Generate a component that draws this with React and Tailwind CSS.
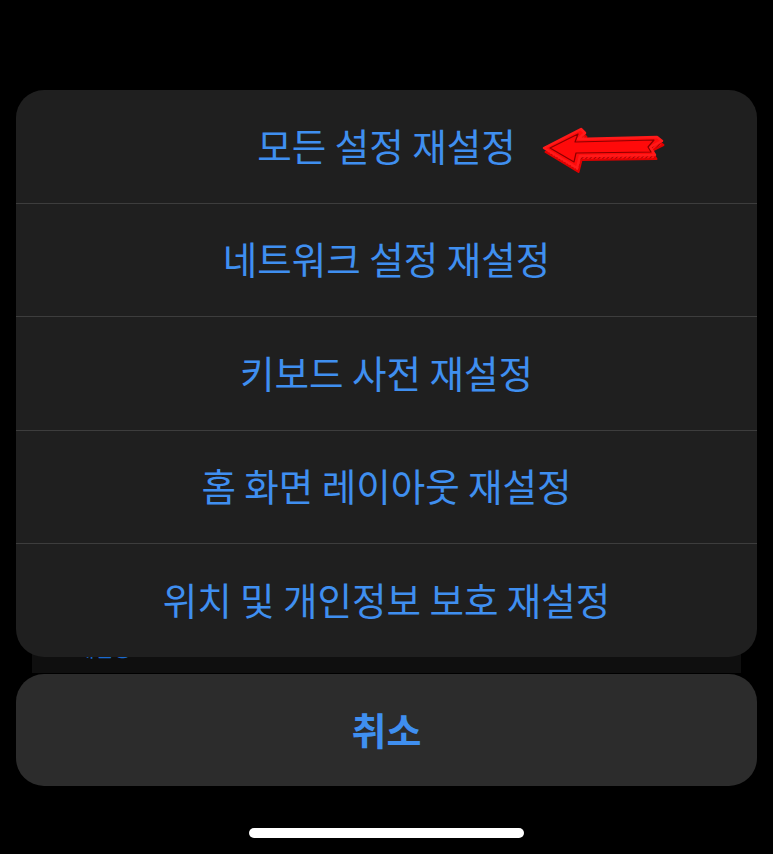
import React from "react";

const font = { fontFamily: '"Noto Sans CJK KR", "Noto Sans", sans-serif' };

const rows = [
  "모든 설정 재설정",
  "네트워크 설정 재설정",
  "키보드 사전 재설정",
  "홈 화면 레이아웃 재설정",
  "위치 및 개인정보 보호 재설정",
];

function Arrow() {
  const front = "544,148 581,129 585,133 578,139 657,137 662,141 650,147 655,155 580,156 577,168";
  return (
    <svg
      className="absolute z-20 left-[538px] top-[122px]"
      width="130"
      height="54"
      viewBox="538 122 130 54"
    >
      <defs>
        <pattern id="hatch" width="3" height="3" patternUnits="userSpaceOnUse" patternTransform="rotate(45)">
          <rect width="3" height="3" fill="#ff1010" />
          <line x1="0" y1="0" x2="0" y2="3" stroke="#7a0000" strokeWidth="1.4" />
        </pattern>
      </defs>
      <g transform="translate(1.5,4)">
        <polygon points={front} fill="url(#hatch)" stroke="#e00000" strokeWidth="2" strokeLinejoin="round" />
      </g>
      <polygon points={front} fill="#ff0a0a" stroke="#ff1a1a" strokeWidth="2.5" strokeLinejoin="round" />
      <polygon
        points="550,148 578,134 575,142 654,140 648,147 651,152 576,153 574,162"
        fill="none"
        stroke="#8a0000"
        strokeWidth="1.2"
        strokeLinejoin="round"
      />
    </svg>
  );
}

export default function App() {
  return (
    <div className="relative w-[773px] h-[854px] bg-black overflow-hidden flex flex-col px-4 pt-[90px]" style={font}>
      {/* partially hidden sheet behind */}
      <div className="absolute left-[32px] top-[600px] w-[709px] h-[73px] bg-[#0f0f0f] z-0">
        <div className="absolute left-[44px] top-[36px] text-[20px] leading-[26px] text-[#1a6ad0]">재설정</div>
      </div>

      <div className="relative z-10 h-[567px] rounded-[28px] bg-[#1f1f1f] flex flex-col overflow-hidden">
        {rows.map((t, i) => (
          <div
            key={i}
            className={
              "flex-1 flex items-center justify-center pb-[3px] text-[37.5px] text-[#3f8ff0] " +
              (i > 0 ? "border-t border-[#3d3d3d]" : "")
            }
          >
            {t}
          </div>
        ))}
      </div>

      <div className="relative z-10 mt-[17px] h-[112px] rounded-[28px] bg-[#2c2c2c] flex items-center justify-center pb-[3px] text-[38px] font-bold text-[#3f8ff0]">
        취소
      </div>

      <div className="mt-[42px] self-center w-[275px] h-[10px] rounded-full bg-white" />

      <Arrow />
    </div>
  );
}
